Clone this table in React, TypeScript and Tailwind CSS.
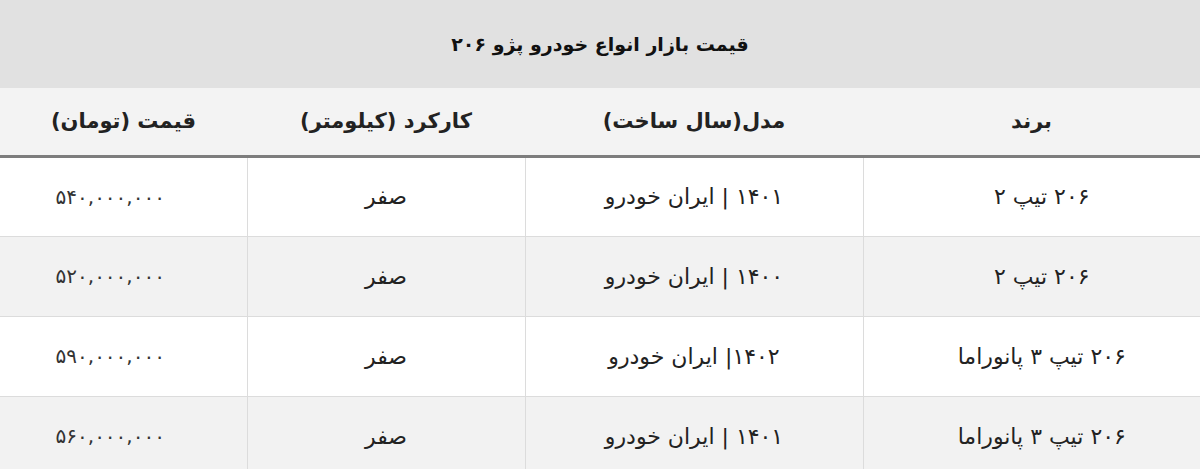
const rows = [
  { brand: "۲۰۶ تیپ ۲", model: "۱۴۰۱ | ایران خودرو", km: "صفر", price: "۵۴۰,۰۰۰,۰۰۰" },
  { brand: "۲۰۶ تیپ ۲", model: "۱۴۰۰ | ایران خودرو", km: "صفر", price: "۵۲۰,۰۰۰,۰۰۰" },
  { brand: "۲۰۶ تیپ ۳ پانوراما", model: "۱۴۰۲| ایران خودرو", km: "صفر", price: "۵۹۰,۰۰۰,۰۰۰" },
  { brand: "۲۰۶ تیپ ۳ پانوراما", model: "۱۴۰۱ | ایران خودرو", km: "صفر", price: "۵۶۰,۰۰۰,۰۰۰" },
];

export default function App() {
  return (
    <div
      dir="rtl"
      className="h-[469px] w-[1200px] overflow-hidden bg-white text-[#222]"
      style={{ fontFamily: '"DejaVu Sans", "Noto Sans", sans-serif' }}
    >
      <div className="flex h-[88px] items-center justify-center bg-[#e1e1e1] text-[19px] font-bold text-[#111]">
        قیمت بازار انواع خودرو پژو ۲۰۶
      </div>
      <table className="w-full table-fixed border-collapse">
        <colgroup>
          <col className="w-[337px]" />
          <col className="w-[338px]" />
          <col className="w-[278px]" />
          <col className="w-[247px]" />
        </colgroup>
        <thead>
          <tr className="h-[68px] border-b-[3px] border-[#7d7d7d] bg-[#f3f3f3] text-[21px] text-[#222]">
            <th className="text-center font-bold">برند</th>
            <th className="text-center font-bold">مدل(سال ساخت)</th>
            <th className="text-center font-bold">کارکرد (کیلومتر)</th>
            <th className="text-center font-bold">قیمت (تومان)</th>
          </tr>
        </thead>
        <tbody>
          {rows.map((r, i) => (
            <tr
              key={i}
              className={`h-[80px] border-b border-[#dcdcdc] text-[22px] ${i % 2 === 1 ? "bg-[#f2f2f2]" : "bg-white"}`}
            >
              <td className="pl-[20px] text-center">{r.brand}</td>
              <td className="border-r border-[#dcdcdc] text-center">{r.model}</td>
              <td className="border-r border-[#dcdcdc] text-center">{r.km}</td>
              <td className="border-r border-[#dcdcdc] pr-[26px] text-center text-[20px] tracking-[4px] text-[#333]">{r.price}</td>
            </tr>
          ))}
        </tbody>
      </table>
    </div>
  );
}
